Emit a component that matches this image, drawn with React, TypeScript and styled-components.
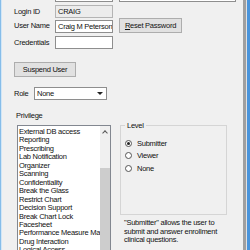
import styled, { createGlobalStyle } from 'styled-components'

const Global = createGlobalStyle`
  html, body { margin: 0; padding: 0; background: #f0f0f0; }
  body {
    font-family: "Liberation Sans", Arial, sans-serif;
    font-size: 7.5px;
    letter-spacing: -0.25px;
    color: #111;
  }
`

const Window = styled.div`
  width: 250px;
  height: 250px;
  overflow: hidden;
  display: flex;
  background: #f0f0f0;
`

const LeftEdge = styled.div`
  width: 1px;
  border-right: 1px solid #d2e6f6;
  background: #86bde9;
`

const RightFrame = styled.div`
  width: 3px;
  margin-left: 2px;
  background: #a0a0a0;
  border-right: 1px solid #e2e2e2;
`

const BlueEdge = styled.div`
  width: 3px;
  background: #4a95dc;
`

const Content = styled.div`
  flex: 1;
  display: flex;
  flex-direction: column;
  padding-left: 12px;
`

const Row = styled.div<{ $top: number; $h?: number }>`
  display: flex;
  align-items: flex-end;
  margin-top: ${p => p.$top}px;
  height: ${p => p.$h ?? 13}px;
`

const Label = styled.span<{ $w?: number }>`
  width: ${p => p.$w ?? 41}px;
  flex-shrink: 0;
  line-height: 13px;
  align-self: center;
`

const Field = styled.div<{ $w?: number; $ml?: number; $readonly?: boolean }>`
  box-sizing: border-box;
  width: ${p => p.$w ?? 58}px;
  margin-left: ${p => p.$ml ?? 0}px;
  height: 13px;
  border: 1px solid ${p => (p.$readonly ? '#b4b4b4' : '#8e8e8e')};
  background: ${p => (p.$readonly ? '#ececec' : '#fff')};
  padding-left: 2px;
  line-height: 11px;
  white-space: nowrap;
  overflow: hidden;
  flex-shrink: 0;
`

const Button = styled.div<{ $w: number; $ml?: number }>`
  box-sizing: border-box;
  width: ${p => p.$w}px;
  height: 15px;
  margin-left: ${p => p.$ml ?? 0}px;
  border: 1px solid #adadad;
  background: #e1e1e1;
  text-align: center;
  line-height: 13px;
  flex-shrink: 0;
  u { text-decoration: underline; }
`

const Select = styled.div`
  box-sizing: border-box;
  width: 73px;
  height: 13px;
  border: 1px solid #8e8e8e;
  background: #fff;
  display: flex;
  align-items: center;
  justify-content: space-between;
  padding: 0 3px 0 2px;
`

const Caret = styled.span`
  width: 0;
  height: 0;
  border-left: 3px solid transparent;
  border-right: 3px solid transparent;
  border-top: 3px solid #222;
`

const Caption = styled.div`
  margin-top: 11px;
  margin-left: 2px;
  line-height: 9px;
`

const Bottom = styled.div`
  display: flex;
  margin-top: 5px;
  flex: 1;
  min-height: 0;
`

const ListBox = styled.div`
  box-sizing: border-box;
  width: 94px;
  margin-left: 3px;
  height: 140px;
  border: 1px solid #828790;
  border-bottom: none;
  background: #fff;
  display: flex;
`

const Items = styled.div`
  flex: 1;
  overflow: hidden;
  padding-top: 2px;
  padding-left: 1px;
`

const Item = styled.div`
  line-height: 8.45px;
  white-space: nowrap;
`

const ScrollBar = styled.div`
  width: 10px;
  background: #f0f0f0;
  display: flex;
  flex-direction: column;
  align-items: center;
`

const UpArrow = styled.span`
  margin-top: 5px;
  width: 3px;
  height: 3px;
  border-left: 1px solid #555;
  border-top: 1px solid #555;
  transform: rotate(45deg);
`

const Thumb = styled.div`
  margin-top: 33px;
  width: 10px;
  flex: 1;
  background: #cdcdcd;
`

const Side = styled.div`
  width: 107px;
  margin-left: 9px;
  display: flex;
  flex-direction: column;
`

const Group = styled.fieldset`
  box-sizing: border-box;
  margin: -4px 0 0 0;
  height: 94px;
  border: 1px solid #d5d5d5;
  padding: 7px 0 0 0;
  min-width: 0;
`

const Legend = styled.legend`
  line-height: 9px;
  padding: 0 2px;
  margin-left: 4px;
`

const RadioRow = styled.div`
  display: flex;
  align-items: center;
  height: 12.5px;
  padding-left: 4px;
`

const Radio = styled.span<{ $on?: boolean }>`
  box-sizing: border-box;
  width: 7px;
  height: 7px;
  border-radius: 50%;
  border: 1px solid #555;
  background: #fff;
  margin-right: 5px;
  display: flex;
  align-items: center;
  justify-content: center;
  &::after {
    content: '';
    width: 3px;
    height: 3px;
    border-radius: 50%;
    background: ${p => (p.$on ? '#222' : 'transparent')};
  }
`

const Note = styled.div`
  margin-top: 4px;
  padding-left: 4px;
  line-height: 8.5px;
`

const privileges = [
  'External DB access',
  'Reporting',
  'Prescribing',
  'Lab Notification',
  'Organizer',
  'Scanning',
  'Confidentiality',
  'Break the Glass',
  'Restrict Chart',
  'Decision Support',
  'Break Chart Lock',
  'Facesheet',
  'Performance Measure Map',
  'Drug Interaction',
  'Logical Access',
  'Audit',
]

const levels = ['Submitter', 'Viewer', 'None']

const App = () => {
  return (
    <Window>
      <Global />
      <LeftEdge />
      <Content>
        <Row $top={-11}>
          <Label />
          <Field />
          <Field $w={117} $ml={6} />
        </Row>
        <Row $top={3}>
          <Label>Login ID</Label>
          <Field $readonly>CRAIG</Field>
        </Row>
        <Row $top={0} $h={15}>
          <Label>User Name</Label>
          <Field>Craig M Peterson</Field>
          <Button $w={63} $ml={6}>
            <u>R</u>eset Password
          </Button>
        </Row>
        <Row $top={3}>
          <Label>Credentials</Label>
          <Field />
        </Row>
        <Row $top={13} $h={15}>
          <Button $w={62}>Suspend User</Button>
        </Row>
        <Row $top={10}>
          <Label $w={20}>Role</Label>
          <Select>
            <span>None</span>
            <Caret />
          </Select>
        </Row>
        <Caption>Privilege</Caption>
        <Bottom>
          <ListBox>
            <Items>
              {privileges.map(p => (
                <Item key={p}>{p}</Item>
              ))}
            </Items>
            <ScrollBar>
              <UpArrow />
              <Thumb />
            </ScrollBar>
          </ListBox>
          <Side>
            <Group>
              <Legend>Level</Legend>
              {levels.map((l, i) => (
                <RadioRow key={l}>
                  <Radio $on={i === 0} />
                  {l}
                </RadioRow>
              ))}
            </Group>
            <Note>
              "Submitter" allows the user to
              <br />
              submit and answer enrollment
              <br />
              clinical questions.
            </Note>
          </Side>
        </Bottom>
      </Content>
      <RightFrame />
      <BlueEdge />
    </Window>
  )
}

export default App
